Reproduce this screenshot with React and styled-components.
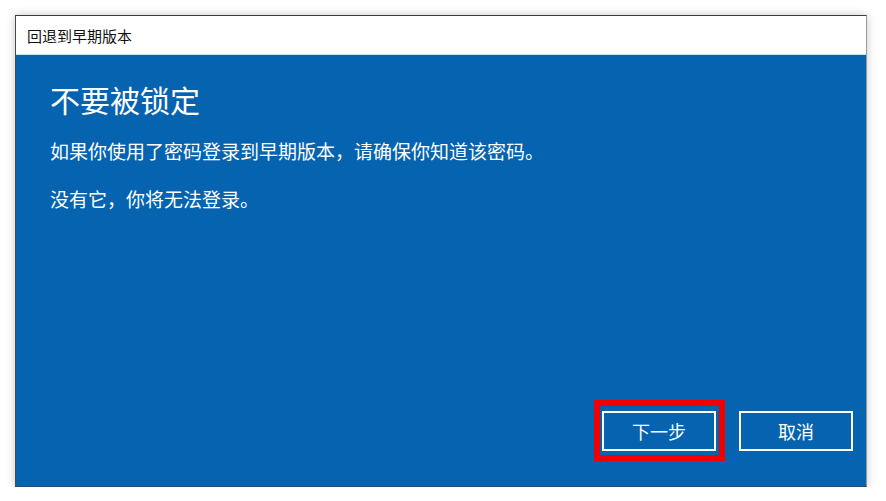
import React from 'react';
import styled, { createGlobalStyle } from 'styled-components';

const GlobalStyle = createGlobalStyle`
  html, body {
    margin: 0;
    padding: 0;
    background: #ffffff;
    font-family: "Noto Sans CJK SC", "Noto Sans", sans-serif;
  }
`;

// Outer dialog window
const Window = styled.div`
  margin: 15px 0 0 15px;
  width: 852px;
  height: 472px;
  box-sizing: border-box;
  display: flex;
  flex-direction: column;
  border-top: 1px solid #3c3c3c;
  border-left: 1px solid #4a4a4a;
  border-right: 1px solid #9a9a9a;
  border-bottom: 1px solid #2d4d70;
  box-shadow: 0 0 9px rgba(0, 0, 0, 0.22);
`;

const TitleBar = styled.div`
  height: 38px;
  display: flex;
  align-items: center;
  padding-left: 11px;
  background: #ffffff;
  border-bottom: 1px solid #bfe4f3;
  font-size: 15px;
  color: #111;
`;

const Content = styled.div`
  flex: 1;
  display: flex;
  flex-direction: column;
  background: #0563b0;
  color: #ffffff;
  padding: 27px 13px 35px 34px;
`;

const Heading = styled.h1`
  margin: 0;
  font-size: 30px;
  line-height: 35px;
  font-weight: 400;
`;

const Text = styled.p`
  margin: ${(p) => p.$top}px 0 0;
  font-size: 19px;
  line-height: 24px;
`;

const Actions = styled.div`
  margin-top: auto;
  display: flex;
  justify-content: flex-end;
  gap: 23px;
`;

// the red marker drawn round the highlighted button
const Highlight = styled.div`
  position: relative;

  &::before {
    content: '';
    position: absolute;
    top: -11px;
    bottom: -10px;
    left: -8px;
    right: -9px;
    border: 6px solid #f20000;
    pointer-events: none;
  }
`;

const Button = styled.button`
  width: 114px;
  height: 40px;
  box-sizing: border-box;
  border: 2px solid #ffffff;
  background: transparent;
  color: #ffffff;
  font-family: inherit;
  font-size: 18px;
  cursor: pointer;
`;

const App = () => {
  return (
    <>
      <GlobalStyle />
      <Window>
        <TitleBar>回退到早期版本</TitleBar>
        <Content>
          <Heading>不要被锁定</Heading>
          <Text $top={22}>如果你使用了密码登录到早期版本，请确保你知道该密码。</Text>
          <Text $top={24}>没有它，你将无法登录。</Text>
          <Actions>
            <Highlight>
              <Button>下一步</Button>
            </Highlight>
            <Button>取消</Button>
          </Actions>
        </Content>
      </Window>
    </>
  );
};

export default App;
